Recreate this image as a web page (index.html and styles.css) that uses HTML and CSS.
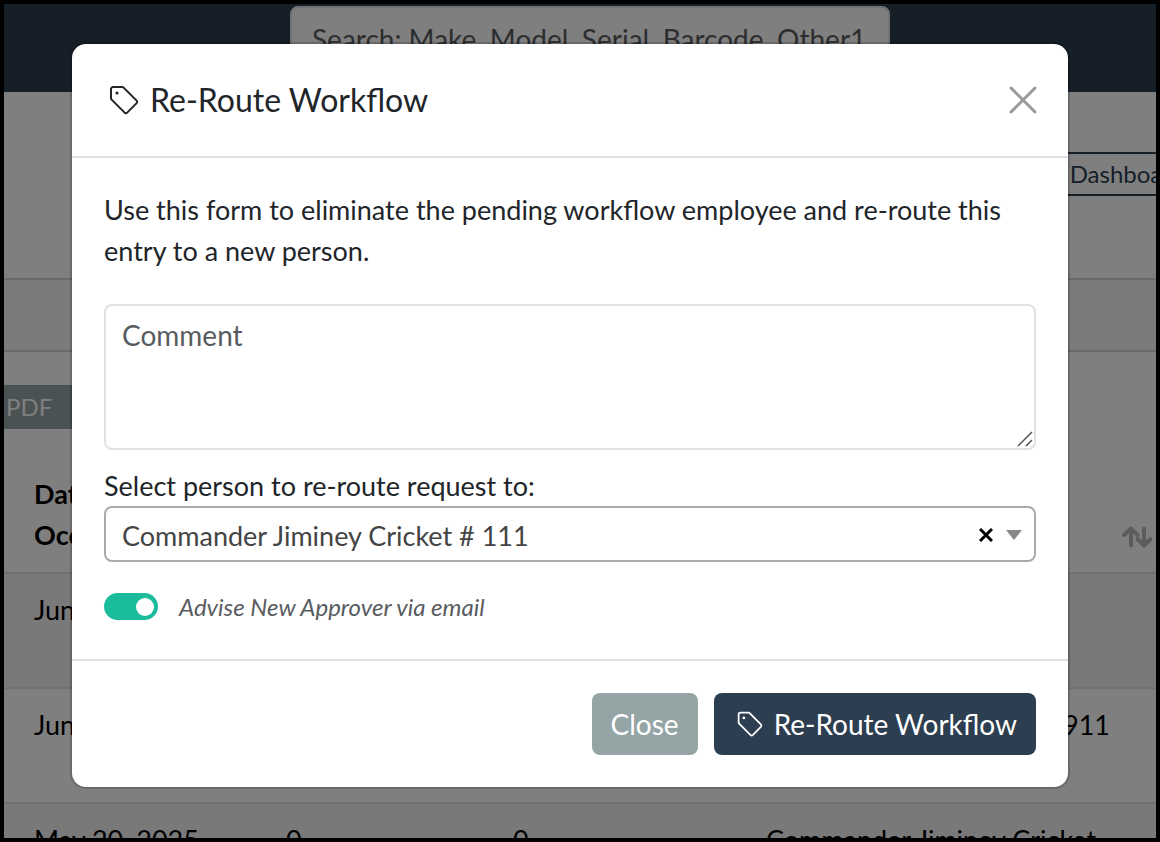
FILE: index.html
```html
<!DOCTYPE html>
<html lang="en">
<head>
<meta charset="utf-8">
<title>Re-Route Workflow</title>
<link rel="stylesheet" href="styles.css">
</head>
<body>
<div class="frame">
  <div class="page">
    <header class="topbar">
      <input class="search" type="text" aria-label="Search" placeholder="Search: Make, Model, Serial, Barcode, Other1">
    </header>
    <nav class="toolbar"><button class="dash-btn" type="button">Dashboard</button></nav>
    <div class="band"></div>
    <div class="exports"><button class="pdf-btn" type="button">PDF</button></div>
    <table class="entries">
      <colgroup><col class="col-date"><col class="col-num"><col class="col-num2"><col></colgroup>
      <thead>
        <tr>
          <th>Date<br>Occurred</th><th></th><th></th>
          <th class="sorted">
            <svg class="sort" viewBox="0 0 30 22" aria-hidden="true"><path d="M9 19.500V2.500M2 9l7-6.500L15.500 9M22 2.500v17M15.500 13l6.500 6.500 6.500-6.500"/></svg>
          </th>
        </tr>
      </thead>
      <tbody>
        <tr><td>Jun</td><td></td><td></td><td></td></tr>
        <tr><td>Jun</td><td></td><td></td><td class="badge-no"># 911</td></tr>
        <tr><td>May 20, 2025</td><td>0</td><td>0</td><td>Commander Jiminey Cricket</td></tr>
      </tbody>
    </table>
  </div>

  <div class="backdrop">
    <form class="modal" role="dialog" aria-labelledby="modal-title">
      <div class="modal-header">
        <svg class="tag" viewBox="0 0 16 16" aria-hidden="true"><path d="M1.500 2.500a1 1 0 0 1 1-1h4.600a1 1 0 0 1 .7.300l6.400 6.400a1.100 1.100 0 0 1 0 1.500l-4.500 4.500a1.100 1.100 0 0 1-1.500 0L1.800 7.800a1 1 0 0 1-.3-.7z"/><circle cx="4.500" cy="4.500" r=".8"/></svg>
        <h1 class="modal-title" id="modal-title">Re-Route Workflow</h1>
        <button class="dismiss" type="button" aria-label="Dismiss">
          <svg viewBox="0 0 30 30" aria-hidden="true"><path d="M3 3l24 24M27 3L3 27"/></svg>
        </button>
      </div>
      <div class="modal-body">
        <p class="intro">Use this form to eliminate the pending workflow employee and re-route this entry to a new person.</p>
        <div class="field">
          <textarea class="comment" aria-label="Comment" placeholder="Comment"></textarea>
          <svg class="grip" viewBox="0 0 16 16" aria-hidden="true"><path d="M1 15L15 1M9 15l6-6"/></svg>
        </div>
        <label class="select-label" for="person">Select person to re-route request to:</label>
        <div class="field">
          <select class="person" id="person"><option>Commander Jiminey Cricket # 111</option></select>
          <button class="clear" type="button" aria-label="Clear selection"><svg viewBox="0 0 14 14" aria-hidden="true"><path d="M1 1l12 12M13 1L1 13"/></svg></button>
          <svg class="caret" viewBox="0 0 16 10" aria-hidden="true"><path d="M0 0h16L8 10z"/></svg>
        </div>
        <div class="switch-row">
          <input class="switch" type="checkbox" id="advise" checked>
          <label class="switch-label" for="advise">Advise New Approver via email</label>
        </div>
      </div>
      <div class="modal-footer">
        <button class="btn btn-close" type="button">Close</button>
        <button class="btn btn-primary" type="submit">
          <svg class="tag tag-small" viewBox="0 0 16 16" aria-hidden="true"><path d="M1.500 2.500a1 1 0 0 1 1-1h4.600a1 1 0 0 1 .7.300l6.400 6.400a1.100 1.100 0 0 1 0 1.500l-4.500 4.500a1.100 1.100 0 0 1-1.500 0L1.800 7.800a1 1 0 0 1-.3-.7z"/><circle cx="4.500" cy="4.500" r=".8"/></svg>
          Re-Route Workflow
        </button>
      </div>
    </form>
  </div>
</div>
</body>
</html>
```

FILE: styles.css
```css
* { box-sizing: border-box; }

body {
  margin: 0;
  font-family: Lato, "Liberation Sans", sans-serif;
  font-size: 27px;
  line-height: 41px;
  color: #212529;
}

button, input, select, textarea { font: inherit; margin: 0; }
button { cursor: pointer; }
svg { display: block; }

.frame {
  position: relative;
  height: 100vh;
  border: 4px solid #000;
  overflow: hidden;
}

.page { background: #fff; color: #000; }

.topbar {
  display: flex;
  justify-content: center;
  height: 88px;
  padding: 2px 0 0 20px;
  background: #2c3e50;
}

.search {
  width: 600px;
  height: 66px;
  padding: 0 20px;
  border: 2px solid #dee2e6;
  border-radius: 8px;
  background: #fff;
  color: #212529;
  font-size: 28px;
}
.search::placeholder { color: #595c5f; opacity: 1; }

.toolbar {
  display: flex;
  justify-content: flex-end;
  height: 186px;
  padding-top: 60px;
  margin-right: -46px;
}

.dash-btn {
  height: 44px;
  padding: 0 16px;
  border: 2px solid #2c3e50;
  background: #fff;
  color: #2c3e50;
  font-size: 24px;
  line-height: 36px;
}

.band {
  height: 74px;
  border: solid #d2d2d2;
  border-width: 2px 0;
  background: #f7f7f7;
}

.exports { padding: 33px 0 36px; }

.pdf-btn {
  display: block;
  width: 160px;
  height: 44px;
  padding: 0 2px;
  border: 0;
  background: #95a5a6;
  color: #fff;
  font-size: 24px;
  line-height: 36px;
  text-align: left;
}

.entries {
  width: 100%;
  table-layout: fixed;
  border-collapse: separate;
  border-spacing: 0;
}
.col-date { width: 252px; }
.col-num { width: 227px; }
.col-num2 { width: 253px; }

.entries th, .entries td {
  padding: 15px 0 15px 30px;
  border-bottom: 2px solid #dee2e6;
  text-align: left;
  vertical-align: top;
  white-space: nowrap;
}
.entries th { padding-top: 8px; padding-bottom: 17px; }
.entries th.sorted { vertical-align: bottom; padding-bottom: 24px; }
.entries td { height: 115px; }
.entries tbody tr:nth-child(odd) { background: #f2f2f2; }
.entries td.badge-no { padding-right: 46px; text-align: right; }

.sort {
  width: 30px;
  height: 22px;
  margin: 0 4px 0 auto;
  fill: none;
  stroke: #b9b9b9;
  stroke-width: 4;
  stroke-linecap: round;
  stroke-linejoin: round;
}

.backdrop {
  position: absolute;
  inset: 0;
  padding: 38px 86px 38px 66px;
  background: rgba(0, 0, 0, .5);
}

.modal {
  max-width: 1000px;
  margin: 0 auto;
  border: 2px solid rgba(0, 0, 0, .175);
  border-radius: 16px;
  background: #fff;
  background-clip: padding-box;
}

.modal-header {
  display: flex;
  align-items: center;
  gap: 10px;
  height: 114px;
  padding: 0 30px 0 36px;
  border-bottom: 2px solid #dee2e6;
}

.modal-title {
  flex: 1;
  margin: 0;
  font-size: 32px;
  line-height: 40px;
  font-weight: 400;
}

.tag {
  flex: none;
  width: 32px;
  height: 32px;
  fill: none;
  stroke: currentColor;
  stroke-width: 1;
}
.tag circle { fill: currentColor; stroke: none; }
.tag-small { width: 28px; height: 28px; }

.dismiss {
  padding: 0;
  border: 0;
  background: none;
}
.dismiss svg {
  width: 30px;
  height: 30px;
  stroke: #999;
  stroke-width: 3;
  stroke-linecap: round;
}

.modal-body { padding: 31px 32px 32px; }

.intro { margin: 0 0 33px; }

.field { position: relative; }

.comment {
  display: block;
  width: 100%;
  height: 146px;
  padding: 9px 16px;
  border: 2px solid #dee2e6;
  border-radius: 8px;
  background: #fff;
  color: #212529;
  font-size: 28px;
  resize: none;
}
.comment::placeholder { color: #595c5f; opacity: 1; }

.grip {
  position: absolute;
  right: 3px;
  bottom: 3px;
  width: 16px;
  height: 16px;
  stroke: #555;
  stroke-width: 1.500;
}

.select-label {
  display: block;
  margin-top: 16px;
  line-height: 40px;
}

.person {
  display: block;
  width: 100%;
  height: 56px;
  padding: 2px 80px 0 16px;
  border: 2px solid #aaa;
  border-radius: 8px;
  background: #fff;
  color: #444;
  appearance: none;
}

.clear {
  position: absolute;
  top: 22px;
  right: 43px;
  padding: 0;
  border: 0;
  background: none;
}
.clear svg {
  width: 14px;
  height: 14px;
  stroke: #000;
  stroke-width: 3;
}

.caret {
  position: absolute;
  top: 24px;
  right: 14px;
  width: 16px;
  height: 10px;
  fill: #888;
  pointer-events: none;
}

.switch-row {
  display: flex;
  align-items: center;
  gap: 21px;
  margin-top: 24px;
}

.switch {
  display: flex;
  align-items: center;
  justify-content: flex-end;
  width: 54px;
  height: 27px;
  padding: 0 4px;
  border-radius: 14px;
  background: #1abc9c;
  appearance: none;
}
.switch::before {
  content: "";
  width: 18px;
  height: 18px;
  border-radius: 50%;
  background: #fff;
}

.switch-label {
  color: #595c5f;
  font-size: 24px;
  font-style: italic;
}

.modal-footer {
  display: flex;
  justify-content: flex-end;
  gap: 16px;
  padding: 32px;
  border-top: 2px solid #dee2e6;
}

.btn {
  display: flex;
  align-items: center;
  gap: 10px;
  height: 62px;
  padding: 0 19px;
  border: 0;
  border-radius: 8px;
  color: #fff;
  font-size: 28px;
}
.btn-close { background: #95a5a6; }
.btn-primary { padding-left: 22px; background: #2c3e50; }
```
